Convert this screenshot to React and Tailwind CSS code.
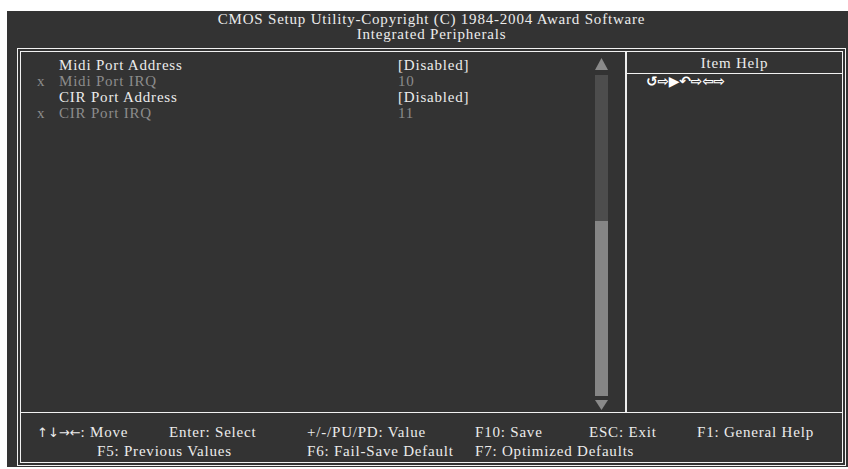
const rows = [
  { mark: "", label: "Midi Port Address", value: "[Disabled]", dim: false },
  { mark: "x", label: "Midi Port IRQ", value: "10", dim: true },
  { mark: "", label: "CIR Port Address", value: "[Disabled]", dim: false },
  { mark: "x", label: "CIR Port IRQ", value: "11", dim: true },
];

function App() {
  return (
    <div className="w-[848px] h-[469px] bg-white pt-[11px] pl-[7px]" style={{ fontFamily: '"Liberation Serif", "DejaVu Serif", serif' }}>
      <div className="h-[456px] bg-[#333333] text-[#ececec] text-[15px] leading-[16px] tracking-[0.8px] flex flex-col">
        {/* title */}
        <div className="ml-[10px] mr-[2px] pt-[1px] h-[37px] text-center">
          <div className="h-[15px] leading-[15px]">CMOS Setup Utility-Copyright (C) 1984-2004 Award Software</div>
          <div className="h-[15px] leading-[15px]">Integrated Peripherals</div>
        </div>

        {/* frame */}
        <div className="ml-[10px] mr-[2px] mb-[1px] flex-1 border-4 border-double border-[#f2f2f2] flex flex-col">
          <div className="h-[361px] flex border-b border-[#f2f2f2]">
            <div className="w-[604px] flex">
              <div className="flex-1 pt-[5px]">
                {rows.map((r) => (
                  <div key={r.label} className={`h-[16px] flex ${r.dim ? "text-[#8c8c8c]" : "text-[#ececec]"}`}>
                    <span className="w-[38px] pl-[16px]">{r.mark}</span>
                    <span className="w-[339px]">{r.label}</span>
                    <span>{r.value}</span>
                  </div>
                ))}
              </div>
              {/* scrollbar */}
              <div className="w-[13px] mr-[17px] flex flex-col items-center">
                <svg width="13" height="13" viewBox="0 0 13 13" className="mt-[6px]">
                  <polygon points="6.5,0 13,12 0,12" fill="#8a8a8a" />
                </svg>
                <div className="w-[13px] mt-[4px] h-[321px] bg-[#4d4d4d] flex flex-col justify-end">
                  <div className="h-[175px] bg-[#858585]" />
                </div>
                <svg width="13" height="10" viewBox="0 0 13 10" className="mt-[4px]">
                  <polygon points="0,0 13,0 6.5,10" fill="#8a8a8a" />
                </svg>
              </div>
            </div>
            <div className="flex-1 border-l-2 border-[#eeeeee] flex flex-col">
              <div className="h-[22px] border-b border-[#f2f2f2] text-center leading-[22px]">Item Help</div>
              <div className="pl-[19px] pt-[1px] text-[14px] leading-[13px] tracking-[-0.3px] font-bold text-white" style={{ fontFamily: '"DejaVu Sans", sans-serif' }}>
                ↺⇨▶↶⇨⇦⇨
              </div>
            </div>
          </div>

          {/* footer */}
          <div className="flex-1 pt-[11px] pl-[16px]">
            <div className="h-[19px] flex">
              <span className="w-[132px]">
                <span className="text-[13px] tracking-[0px]" style={{ fontFamily: '"DejaVu Sans", sans-serif' }}>↑↓→←</span>: Move
              </span>
              <span className="w-[138px]">Enter: Select</span>
              <span className="w-[168px]">+/-/PU/PD: Value</span>
              <span className="w-[114px]">F10: Save</span>
              <span className="w-[108px]">ESC: Exit</span>
              <span>F1: General Help</span>
            </div>
            <div className="h-[19px] flex">
              <span className="w-[60px]" />
              <span className="w-[210px]">F5: Previous Values</span>
              <span className="w-[168px]">F6: Fail-Save Default</span>
              <span>F7: Optimized Defaults</span>
            </div>
          </div>
        </div>
      </div>
    </div>
  );
}

export default App;
